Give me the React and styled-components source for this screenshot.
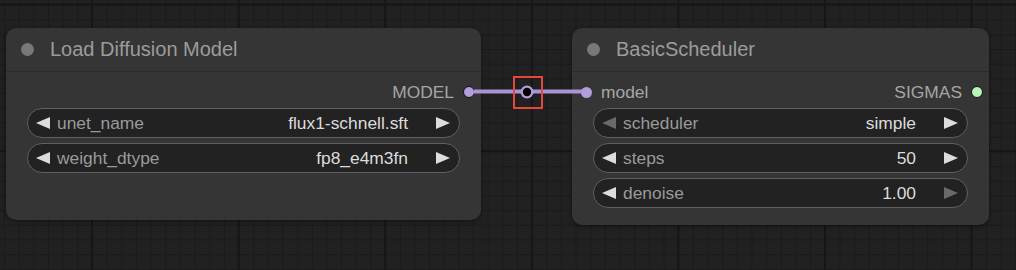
import React from "react";
import styled, { createGlobalStyle } from "styled-components";

const Global = createGlobalStyle`
  html, body { margin: 0; padding: 0; background: #202020; }
  body { font-family: "Liberation Sans", Arial, sans-serif; }
`;

const Canvas = styled.div`
  position: relative;
  width: 1016px;
  height: 270px;
  overflow: hidden;
  box-sizing: border-box;
  padding: 28px 0 0 6px;
  display: flex;
  align-items: flex-start;
  gap: 91px;
  background-color: #212121;
  background-image:
    linear-gradient(to right, #161616 2px, transparent 2px),
    linear-gradient(to bottom, #161616 2px, transparent 2px),
    linear-gradient(to right, #1a1a1a 1px, transparent 1px),
    linear-gradient(to bottom, #1a1a1a 1px, transparent 1px);
  background-size: 146.6px 146.6px, 146.6px 146.6px, 14.66px 14.66px, 14.66px 14.66px;
  background-position: 91px 150px, 91px 150px, 4px 5px, 4px 5px;
`;

const Node = styled.div`
  width: ${(p) => p.$w}px;
  height: ${(p) => p.$h}px;
  background: #353535;
  border-radius: 10px;
  box-shadow: 0 1px 4px rgba(0, 0, 0, 0.45);
  display: flex;
  flex-direction: column;
  flex-shrink: 0;
`;

const TitleBar = styled.div`
  height: 43px;
  border-bottom: 1px solid #2c2c2c;
  display: flex;
  align-items: center;
  padding-left: ${(p) => p.$pad}px;
  gap: ${(p) => 44 - p.$pad - 13}px;
`;

const TitleDot = styled.span`
  width: 13px;
  height: 13px;
  border-radius: 50%;
  background: #787878;
  flex-shrink: 0;
`;

const TitleText = styled.span`
  font-size: 20px;
  color: #9c9c9c;
  white-space: nowrap;
`;

const SlotRow = styled.div`
  height: 36px;
  box-sizing: border-box;
  padding-top: 4px;
  display: flex;
  align-items: center;
  justify-content: space-between;
  font-size: 17.4px;
  color: #a5a5a5;
`;

const Slot = styled.div`
  display: flex;
  align-items: center;
  gap: 9px;
  padding: ${(p) => (p.$out ? "0 6px 0 0" : "0 0 0 9px")};
`;

const InputDot = styled.span`
  width: 11px;
  height: 11px;
  border-radius: 50%;
  background: ${(p) => p.$c};
`;

const OutputDot = styled.span`
  width: 10px;
  height: 10px;
  border-radius: 50%;
  background: ${(p) => p.$c};
  border: 1.5px solid #111;
`;

const Widgets = styled.div`
  display: flex;
  flex-direction: column;
  gap: 5px;
  padding: 0 21px;
`;

const Pill = styled.div`
  height: 30px;
  box-sizing: border-box;
  border: 1px solid #606060;
  border-radius: 15px;
  background: #222222;
  display: flex;
  align-items: center;
  padding: 0 9px 0 8px;
  font-size: 17.4px;
`;

const Arrow = styled.span`
  width: 0;
  height: 0;
  border-top: 6.5px solid transparent;
  border-bottom: 6.5px solid transparent;
  ${(p) =>
    p.$dir === "left"
      ? `border-right: 14px solid ${p.$dim ? "#6a6a6a" : "#dddddd"};`
      : `border-left: 14px solid ${p.$dim ? "#6a6a6a" : "#dddddd"};`}
  flex-shrink: 0;
`;

const Label = styled.span`
  color: #9a9a9a;
  margin-left: 7px;
  white-space: nowrap;
`;

const Value = styled.span`
  color: #dcdcdc;
  margin-left: auto;
  margin-right: 28px;
  white-space: nowrap;
`;

const LinkLayer = styled.svg`
  position: absolute;
  left: 0;
  top: 0;
  pointer-events: none;
`;

const Widget = ({ label, value, dimLeft, dimRight }) => (
  <Pill>
    <Arrow $dir="left" $dim={dimLeft} />
    <Label>{label}</Label>
    <Value>{value}</Value>
    <Arrow $dir="right" $dim={dimRight} />
  </Pill>
);

const MODEL = "#b39ddb";
const SIGMAS = "#b8f5b8";

export default function App() {
  return (
    <>
      <Global />
      <Canvas>
        <Node $w={475} $h={192}>
          <TitleBar $pad={15}>
            <TitleDot />
            <TitleText>Load Diffusion Model</TitleText>
          </TitleBar>
          <SlotRow>
            <span />
            <Slot $out>
              MODEL
              <OutputDot $c={MODEL} />
            </Slot>
          </SlotRow>
          <Widgets>
            <Widget label="unet_name" value="flux1-schnell.sft" />
            <Widget label="weight_dtype" value="fp8_e4m3fn" />
          </Widgets>
        </Node>
        <Node $w={417} $h={197}>
          <TitleBar $pad={15}>
            <TitleDot />
            <TitleText>BasicScheduler</TitleText>
          </TitleBar>
          <SlotRow>
            <Slot>
              <InputDot $c={MODEL} />
              model
            </Slot>
            <Slot $out>
              SIGMAS
              <OutputDot $c={SIGMAS} />
            </Slot>
          </SlotRow>
          <Widgets>
            <Widget label="scheduler" value="simple" dimLeft />
            <Widget label="steps" value="50" />
            <Widget label="denoise" value="1.00" dimRight />
          </Widgets>
        </Node>
        <LinkLayer width="1016" height="270" viewBox="0 0 1016 270">
          <line x1="474" y1="91.5" x2="582" y2="91.5" stroke="#a894d6" strokeWidth="4" />
          <circle cx="527" cy="92" r="6.5" fill={MODEL} />
          <circle cx="527" cy="92" r="4.2" fill="#000" />
          <rect x="514" y="77" width="28" height="31" fill="none" stroke="#e5473b" strokeWidth="2" />
        </LinkLayer>
      </Canvas>
    </>
  );
}
